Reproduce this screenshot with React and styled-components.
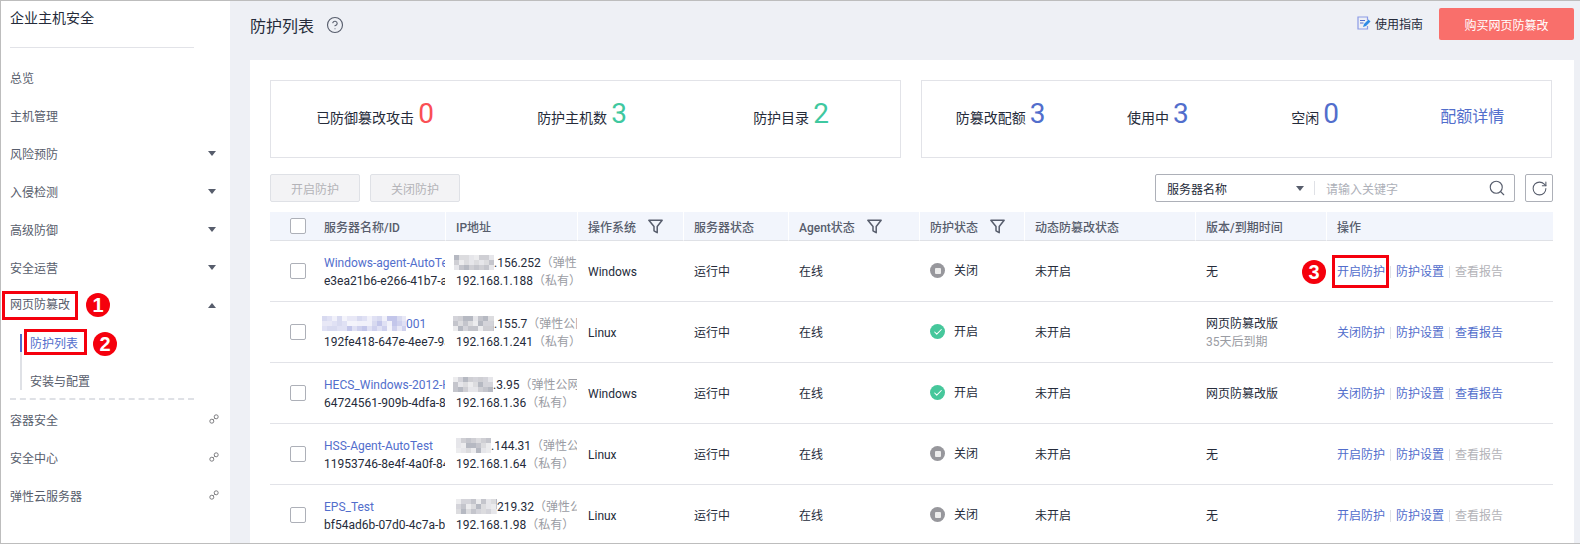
import React from 'react'
import styled, { createGlobalStyle } from 'styled-components'
import { CircleHelp, Search, RotateCw, Check } from 'lucide-react'

const GlobalStyle = createGlobalStyle`
  html, body {
    margin: 0;
    padding: 0;
    background: #eef0f5;
    overflow: hidden;
  }
  * { box-sizing: border-box; }
  body {
    font-family: Roboto, "Noto Sans CJK SC", sans-serif;
    font-size: 12px;
    color: #252b3a;
  }
`

const Page = styled.div`
  display: flex;
  width: 1580px;
  height: 544px;
  overflow: hidden;
  background: #eef0f5;
  border-top: 1px solid #bdbdbd;
  border-left: 1px solid #bdbdbd;
  border-bottom: 1px solid #bdbdbd;
`

/* sidebar */
const Sidebar = styled.aside`
  flex: 0 0 229px;
  background: #fff;
`
const SideTitle = styled.div`
  height: 34px;
  padding-left: 9px;
  line-height: 34px;
  font-size: 14px;
  color: #252b3a;
`
const SideRule = styled.div`
  width: 184px;
  margin: 12px 0 10px 9px;
  border-top: 1px solid #e2e3e8;
`
const NavItem = styled.div`
  display: flex;
  align-items: center;
  justify-content: space-between;
  height: 38px;
  padding: 0 14px 0 9px;
  color: #575d6c;
`
const Caret = styled.span`
  width: 0;
  height: 0;
  border-left: 4px solid transparent;
  border-right: 4px solid transparent;
  border-top: ${p => (p.$up ? '0' : '5px solid #575d6c')};
  border-bottom: ${p => (p.$up ? '5px solid #575d6c' : '0')};
`
const SubList = styled.div`
  display: flex;
  flex-direction: column;
  gap: 20px;
  margin: 10px 0 8px 19px;
  padding-left: 8px;
  border-left: 2px solid #dfe1e6;
`
const SubItem = styled.div`
  position: relative;
  height: 18px;
  padding-top: 1px;
  line-height: 18px;
  color: ${p => (p.$active ? '#526ecc' : '#575d6c')};

  &::before {
    content: ${p => (p.$active ? "''" : 'none')};
    position: absolute;
    left: -10px;
    top: 0;
    width: 2px;
    height: 18px;
    background: #526ecc;
  }
`
const SideDash = styled.div`
  width: 184px;
  height: 2px;
  margin-left: 9px;
  border-top: 2px dashed #dfe1e6;
`
const ChainSlot = styled.span`
  display: flex;
  margin-right: -3px;
`

/* red annotations laid over the screenshot */
const Marked = styled.span`
  position: relative;
  display: inline-block;
  line-height: 18px;

  &::after {
    content: '';
    position: absolute;
    top: ${p => p.$t}px;
    bottom: ${p => p.$b}px;
    left: ${p => p.$l}px;
    right: ${p => p.$r}px;
    border: 3px solid #f5000d;
  }
`
const Badge = styled.span`
  position: absolute;
  top: 50%;
  ${p => (p.$before ? `right: calc(100% + ${p.$gap}px);` : `left: calc(100% + ${p.$gap}px);`)}
  width: 24px;
  height: 24px;
  margin-top: -12px;
  border-radius: 50%;
  background: #f5000d;
  color: #fff;
  font: 700 20px/24px "Liberation Sans", sans-serif;
  text-align: center;
`

/* main */
const Main = styled.main`
  flex: 1;
  min-width: 0;
  padding: 0 6px 0 20px;
`
const Header = styled.header`
  display: flex;
  align-items: flex-start;
  height: 59px;
`
const Title = styled.h1`
  display: flex;
  align-items: center;
  gap: 12px;
  margin: 0;
  height: 48px;
  font-size: 16px;
  font-weight: 400;
  color: #252b3a;

  svg { color: #575d6c; }
`
const GuideLink = styled.a`
  display: flex;
  align-items: center;
  gap: 4px;
  margin: 13px 16px 0 auto;
  height: 18px;
  color: #252b3a;
`
const BuyButton = styled.button`
  width: 135px;
  height: 32px;
  margin-top: 7px;
  border: 0;
  border-radius: 2px;
  background: #f96f6b;
  color: #fff;
  font: inherit;
`
const Panel = styled.section`
  height: 484px;
  padding: 20px 20px 0;
  background: #fff;
`
const Cards = styled.div`
  display: flex;
  gap: 20px;
  width: 1282px;
`
const Card = styled.div`
  flex: 1;
  display: grid;
  grid-template-columns: ${p => p.$cols};
  height: 78px;
  border: 1px solid #e2e3e8;
`
const Stat = styled.div`
  display: flex;
  align-items: baseline;
  justify-content: center;
  gap: 4px;
  padding-top: 13px;
  font-size: 14px;
  color: #252b3a;
`
const StatValue = styled.span`
  font-size: 28px;
  line-height: 40px;
  color: ${p => p.$color};
`
const QuotaLink = styled.a`
  margin-top: 3px;
  font-size: 16px;
  line-height: 40px;
  color: #526ecc;
`
const Toolbar = styled.div`
  display: flex;
  align-items: center;
  gap: 10px;
  margin: 16px 0 10px;
  height: 28px;
`
const GhostButton = styled.button`
  width: 90px;
  height: 28px;
  border: 1px solid #dfe1e6;
  border-radius: 2px;
  background: #f3f3f5;
  color: #b3b3b8;
  font: inherit;
`
const SearchBox = styled.div`
  display: flex;
  align-items: center;
  width: 360px;
  height: 28px;
  margin-left: auto;
  padding: 0 8px 0 11px;
  border: 1px solid #adb0b8;
  border-radius: 2px;
`
const SelectText = styled.span`
  flex: 1;
  color: #252b3a;
`
const SearchDivider = styled.span`
  width: 1px;
  height: 14px;
  margin: 0 11px 0 10px;
  background: #dfe1e6;
`
const Placeholder = styled.span`
  width: 162px;
  color: #adb0b8;
`
const IconButton = styled.button`
  display: flex;
  align-items: center;
  justify-content: center;
  width: 28px;
  height: 28px;
  margin-right: 1px;
  padding: 0;
  border: 1px solid #adb0b8;
  border-radius: 2px;
  background: #fff;
  color: #575d6c;
`

/* table */
const Table = styled.table`
  width: 1283px;
  table-layout: fixed;
  border-collapse: separate;
  border-spacing: 0;
`
const Th = styled.th`
  height: 29px;
  padding: 0 0 0 ${p => (p.$check ? 20 : p.$plain ? 11 : 10)}px;
  border-left: ${p => (p.$plain ? '0' : '1px solid #fff')};
  border-bottom: 1px solid #dfe1e6;
  background: #f2f5fc;
  color: #575d6c;
  font-weight: 500;
  text-align: left;
`
const HeadInner = styled.span`
  display: flex;
  align-items: center;
  gap: 12px;
  color: inherit;
`
const Td = styled.td`
  height: 61px;
  padding: 1px 0 0 ${p => (p.$check ? 20 : 11)}px;
  border-bottom: 1px solid #e2e3e8;
  line-height: 18px;
  white-space: nowrap;
  overflow: ${p => (p.$open ? 'visible' : 'hidden')};
`
const Checkbox = styled.span`
  display: block;
  width: 16px;
  height: 16px;
  margin-top: ${p => (p.$row ? -1 : 0)}px;
  background: #fff;
  border: 1px solid #adb0b8;
  border-radius: 2px;
`
const LinkText = styled.a`
  color: #526ecc;
`
const Muted = styled.span`
  color: #9a9ca3;
`
const Line = styled.div`
  display: flex;
  align-items: center;
  height: 18px;
  white-space: nowrap;
`
const StatusWrap = styled.div`
  display: flex;
  align-items: center;
  gap: 9px;
  margin-top: -2px;
`
const StatusDot = styled.span`
  display: flex;
  align-items: center;
  justify-content: center;
  width: 15px;
  height: 15px;
  border-radius: 50%;
  background: ${p => (p.$on ? '#46c79b' : '#97979c')};
  color: #fff;
`
const StopMark = styled.span`
  width: 6px;
  height: 6px;
  border-radius: 1px;
  background: #ececec;
`
const Actions = styled.div`
  display: flex;
  align-items: center;
`
const Action = styled.a`
  color: ${p => (p.$disabled ? '#b3b3b8' : '#526ecc')};
`
const ActionSep = styled.span`
  width: 1px;
  height: 12px;
  margin: 0 5px;
  background: #dfe1e6;
`
const Shift = styled.span`
  display: flex;
  align-items: center;
  margin-left: ${p => p.$x}px;
`
const MosaicSvg = styled.svg`
  flex: none;
  filter: blur(0.6px);
`

const FilterIcon = () => (
  <svg width='15' height='15' viewBox='0 0 14 14' fill='none' stroke='#575d6c' strokeWidth='1.4' strokeLinejoin='round'>
    <path d='M.8 1.2h12.4L8.6 7v5.8L5.6 11V7z' />
  </svg>
)

const ChainIcon = () => (
  <svg width='10' height='10' viewBox='0 0 10 10' fill='none' stroke='#7d7d80' strokeWidth='1'>
    <circle cx='2.8' cy='7.2' r='2' />
    <circle cx='7.2' cy='2.8' r='2' />
    <path d='M4.4 5.6l1.2-1.2' />
  </svg>
)

const GuideIcon = () => (
  <svg width='14' height='14' viewBox='0 0 14 14' fill='none'>
    <path d='M10.5 4V1H1v12h9.5v-3' stroke='#8b9be6' strokeWidth='1.2' />
    <path d='M3 4.5h5M3 7h3.5' stroke='#526ecc' strokeWidth='1.2' />
    <path d='M6 11l1-3 4.5-4.5 2 2L9 10z' fill='#2f8be6' />
  </svg>
)

// blurred-out part of an address, as in the source screenshot
const GREY = ['#e6e6ea', '#d4d4da', '#c4c5cc', '#b6b9c2', '#dcdcdf', '#ececee', '#cfcfd4']
const LILAC = ['#f1f1fa', '#e0e1f4', '#cfd1ee', '#c3c6ea', '#e8e8f6', '#d8daf0', '#f4f4fb']

const Mosaic = ({ width, seed, colors = GREY }) => {
  const cell = 5
  const cols = Math.ceil(width / cell)
  const cells = []
  let n = seed
  for (let y = 0; y < 3; y++) {
    for (let x = 0; x < cols; x++) {
      n = (n * 7919 + 13) % 1009
      cells.push(<rect key={`${x}-${y}`} x={x * cell} y={y * cell} width={cell} height={cell} fill={colors[n % colors.length]} />)
    }
  }
  return (
    <MosaicSvg width={width} height='15' viewBox={`0 0 ${width} 15`}>
      {cells}
    </MosaicSvg>
  )
}

const rows = [
  {
    name: 'Windows-agent-AutoTest-0001',
    id: 'e3ea21b6-e266-41b7-a8f0-1c0d',
    ipMask: [40, -2, 3],
    eip: '.156.252',
    ip: '192.168.1.188',
    os: 'Windows',
    on: false,
    version: '无',
  },
  {
    maskName: '001',
    id: '192fe418-647e-4ee7-9a31-77c2',
    ipMask: [41, -3, 7],
    eip: '.155.7',
    ip: '192.168.1.241',
    os: 'Linux',
    on: true,
    version: '网页防篡改版',
    expire: '35天后到期',
  },
  {
    name: 'HECS_Windows-2012-HSS-test',
    id: '64724561-909b-4dfa-8c19-02ab',
    ipMask: [40, -3, 11],
    eip: '.3.95',
    ip: '192.168.1.36',
    os: 'Windows',
    on: true,
    version: '网页防篡改版',
  },
  {
    name: 'HSS-Agent-AutoTest',
    id: '11953746-8e4f-4a0f-84d2-6b1e',
    ipMask: [35, 0, 19],
    eip: '.144.31',
    ip: '192.168.1.64',
    os: 'Linux',
    on: false,
    version: '无',
  },
  {
    name: 'EPS_Test',
    id: 'bf54ad6b-07d0-4c7a-b3e6-91f0',
    ipMask: [41, 0, 23],
    eip: '219.32',
    ip: '192.168.1.98',
    os: 'Linux',
    on: false,
    version: '无',
  },
]

const widths = [43, 132, 132, 106, 105, 131, 105, 171, 131, 227]

const App = () => (
  <Page>
    <GlobalStyle />
    <Sidebar>
      <SideTitle>企业主机安全</SideTitle>
      <SideRule />
      <NavItem>总览</NavItem>
      <NavItem>主机管理</NavItem>
      <NavItem>风险预防<Caret /></NavItem>
      <NavItem>入侵检测<Caret /></NavItem>
      <NavItem>高级防御<Caret /></NavItem>
      <NavItem>安全运营<Caret /></NavItem>
      <NavItem>
        <Marked $t={-5} $b={-6} $l={-8} $r={-8}>
          网页防篡改
          <Badge $gap={16}>1</Badge>
        </Marked>
        <Caret $up />
      </NavItem>
      <SubList>
        <SubItem $active>
          <Marked $t={-6} $b={-2} $l={-6} $r={-9}>
            防护列表
            <Badge $gap={15}>2</Badge>
          </Marked>
        </SubItem>
        <SubItem>安装与配置</SubItem>
      </SubList>
      <SideDash />
      <NavItem>容器安全<ChainSlot><ChainIcon /></ChainSlot></NavItem>
      <NavItem>安全中心<ChainSlot><ChainIcon /></ChainSlot></NavItem>
      <NavItem>弹性云服务器<ChainSlot><ChainIcon /></ChainSlot></NavItem>
    </Sidebar>

    <Main>
      <Header>
        <Title>
          防护列表
          <CircleHelp size={18} strokeWidth={1.5} />
        </Title>
        <GuideLink>
          <GuideIcon />
          使用指南
        </GuideLink>
        <BuyButton>购买网页防篡改</BuyButton>
      </Header>

      <Panel>
        <Cards>
          <Card $cols='208px 206px 212px 1fr'>
            <Stat>已防御篡改攻击<StatValue $color='#fa4f55'>0</StatValue></Stat>
            <Stat>防护主机数<StatValue $color='#3fc8a0'>3</StatValue></Stat>
            <Stat>防护目录<StatValue $color='#3fc8a0'>2</StatValue></Stat>
          </Card>
          <Card $cols='repeat(4, 1fr)'>
            <Stat>防篡改配额<StatValue $color='#526ecc'>3</StatValue></Stat>
            <Stat>使用中<StatValue $color='#526ecc'>3</StatValue></Stat>
            <Stat>空闲<StatValue $color='#526ecc'>0</StatValue></Stat>
            <Stat><QuotaLink>配额详情</QuotaLink></Stat>
          </Card>
        </Cards>

        <Toolbar>
          <GhostButton>开启防护</GhostButton>
          <GhostButton>关闭防护</GhostButton>
          <SearchBox>
            <SelectText>服务器名称</SelectText>
            <Caret />
            <SearchDivider />
            <Placeholder>请输入关键字</Placeholder>
            <Search size={18} strokeWidth={1.5} color='#575d6c' />
          </SearchBox>
          <IconButton><RotateCw size={17} strokeWidth={1.5} /></IconButton>
        </Toolbar>

        <Table>
          <colgroup>
            {widths.map((w, i) => <col key={i} width={w} />)}
          </colgroup>
          <thead>
            <tr>
              <Th $check $plain><Checkbox /></Th>
              <Th $plain>服务器名称/ID</Th>
              <Th>IP地址</Th>
              <Th><HeadInner>操作系统<FilterIcon /></HeadInner></Th>
              <Th>服务器状态</Th>
              <Th><HeadInner>Agent状态<FilterIcon /></HeadInner></Th>
              <Th><HeadInner>防护状态<FilterIcon /></HeadInner></Th>
              <Th>动态防篡改状态</Th>
              <Th>版本/到期时间</Th>
              <Th>操作</Th>
            </tr>
          </thead>
          <tbody>
            {rows.map((r, i) => (
              <tr key={i}>
                <Td $check><Checkbox $row /></Td>
                <Td>
                  <Line>
                    {r.name
                      ? <LinkText>{r.name}</LinkText>
                      : (
                        <Shift $x={-2}>
                          <Mosaic width={84} seed={5} colors={LILAC} />
                          <LinkText>{r.maskName}</LinkText>
                        </Shift>
                      )}
                  </Line>
                  <Line>{r.id}</Line>
                </Td>
                <Td>
                  <Line>
                    <Shift $x={r.ipMask[1]}>
                      <Mosaic width={r.ipMask[0]} seed={r.ipMask[2]} />
                      {r.eip}
                    </Shift>
                    <Muted>（弹性公网IP）</Muted>
                  </Line>
                  <Line>{r.ip}<Muted>（私有）</Muted></Line>
                </Td>
                <Td>{r.os}</Td>
                <Td>运行中</Td>
                <Td>在线</Td>
                <Td>
                  <StatusWrap>
                    <StatusDot $on={r.on}>
                      {r.on ? <Check size={10} strokeWidth={2.5} /> : <StopMark />}
                    </StatusDot>
                    {r.on ? '开启' : '关闭'}
                  </StatusWrap>
                </Td>
                <Td>未开启</Td>
                <Td>
                  <Line>{r.version}</Line>
                  {r.expire && <Line><Muted>{r.expire}</Muted></Line>}
                </Td>
                <Td $open>
                  <Actions>
                    {i === 0
                      ? (
                        <Marked $t={-8} $b={-7} $l={-5} $r={-4}>
                          <Action>开启防护</Action>
                          <Badge $before $gap={11}>3</Badge>
                        </Marked>
                      )
                      : <Action>{r.on ? '关闭防护' : '开启防护'}</Action>}
                    <ActionSep />
                    <Action>防护设置</Action>
                    <ActionSep />
                    <Action $disabled={!r.on}>查看报告</Action>
                  </Actions>
                </Td>
              </tr>
            ))}
          </tbody>
        </Table>
      </Panel>
    </Main>
  </Page>
)

export default App
